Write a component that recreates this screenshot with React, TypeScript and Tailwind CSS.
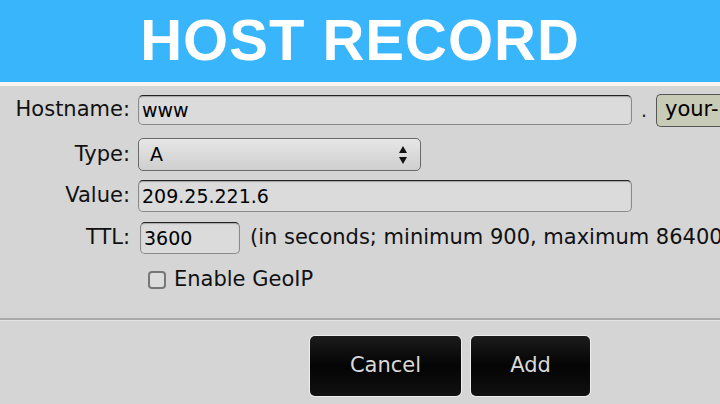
const font = { fontFamily: '"DejaVu Sans", Verdana, sans-serif' };

const Label = ({ text }: { text: string }) => (
    <span className="w-[138px] shrink-0 pr-[8px] text-right text-[21px] text-[#111]">{text}</span>
);

const Field = ({ value, className }: { value: string; className: string }) => (
    <div className={`${className} shrink-0 flex items-center rounded-[5px] border border-[#8a8a8a] border-t-[#222] bg-[#dbdbdb] pl-[3px] text-[19px] text-black shadow-[inset_0_1px_1px_rgba(0,0,0,0.25)]`}>
        {value}
    </div>
);

export default function App() {
    return (
        <div className="w-[720px] h-[404px] overflow-hidden bg-[#d5d5d5]" style={font}>
            <div className="h-[82px] bg-[#39b5fb] flex items-center justify-center">
                <h1 className="text-white font-bold text-[58px] leading-none tracking-[1px] pb-[2px]" style={{ fontFamily: '"Liberation Sans", Arial, sans-serif' }}>
                    HOST RECORD
                </h1>
            </div>
            <div className="h-[4px] bg-[#f8f5f1]"></div>

            <div className="flex flex-col">
                <div className="flex items-center mt-[9px] h-[30px]">
                    <Label text="Hostname:" />
                    <Field value="www" className="w-[494px] h-[30px]" />
                    <span className="w-[24px] shrink-0 text-center text-[19px] text-[#222]">.</span>
                    <div className="h-[33px] flex-1 flex items-center rounded-l-[5px] border border-r-0 border-[#555] bg-[#c8cbb5] pl-[8px] text-[21px] text-black">
                        your-
                    </div>
                </div>

                <div className="flex items-center mt-[13px] h-[33px]">
                    <Label text="Type:" />
                    <div className="w-[283px] h-[33px] shrink-0 flex items-center justify-between rounded-[5px] border border-[#6a6a6a] bg-gradient-to-b from-[#e6e6e6] to-[#cfcfcf] pl-[11px] pr-[12px] text-[19px] text-black">
                        <span>A</span>
                        <svg width="10" height="22" viewBox="0 0 10 22">
                            <path d="M5 2 L9 9 L1 9 Z" fill="#111" />
                            <path d="M5 20 L9 13 L1 13 Z" fill="#111" />
                        </svg>
                    </div>
                </div>

                <div className="flex items-center mt-[9px] h-[32px]">
                    <Label text="Value:" />
                    <Field value="209.25.221.6" className="w-[494px] h-[32px]" />
                </div>

                <div className="flex items-center mt-[10px] h-[32px]">
                    <Label text="TTL:" />
                    <Field value="3600" className="w-[100px] h-[32px] ml-[2px]" />
                    <span className="ml-[10px] whitespace-nowrap text-[21px] text-[#111]">
                        (in seconds; minimum 900, maximum 86400)
                    </span>
                </div>

                <div className="flex items-center mt-[16px] ml-[148px] h-[20px]">
                    <span className="w-[18px] h-[18px] shrink-0 rounded-[4px] border-2 border-[#777] bg-[#dcdcdc]"></span>
                    <span className="ml-[8px] text-[21px] text-[#111]">Enable GeoIP</span>
                </div>

                <div className="mt-[28px] border-t-2 border-[#a9a9a9] border-b border-b-[#e2e2e2]"></div>

                <div className="flex mt-[15px] ml-[310px] gap-[10px]">
                    <button className="w-[151px] h-[60px] rounded-[5px] bg-gradient-to-b from-[#1c1c1c] via-[#050505] to-[#111] text-[#d9d9d9] text-[21px] shadow-[0_0_0_1px_#eeeeee]">
                        Cancel
                    </button>
                    <button className="w-[119px] h-[60px] rounded-[5px] bg-gradient-to-b from-[#1c1c1c] via-[#050505] to-[#111] text-[#d9d9d9] text-[21px] shadow-[0_0_0_1px_#eeeeee]">
                        Add
                    </button>
                </div>
            </div>
        </div>
    );
}
